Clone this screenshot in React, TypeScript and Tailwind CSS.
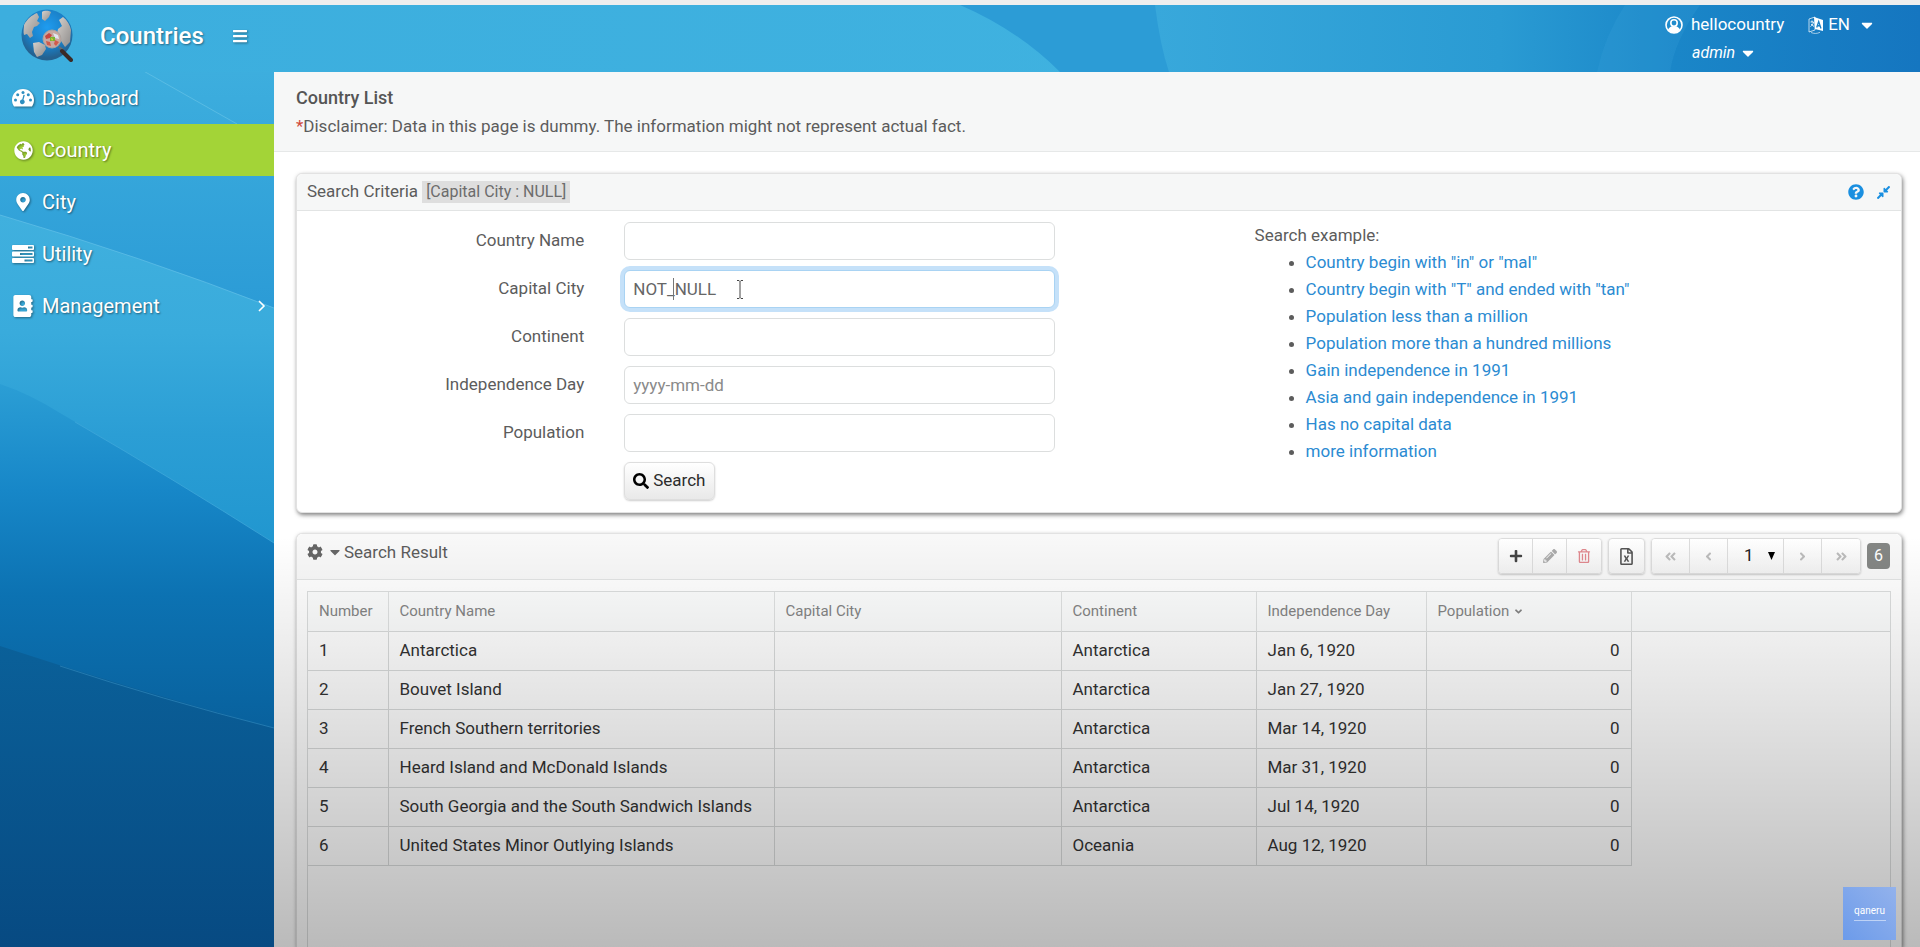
import {
    FaAddressBook,
    FaAngleDoubleLeft,
    FaAngleDoubleRight,
    FaAngleDown,
    FaAngleLeft,
    FaAngleRight,
    FaBars,
    FaCaretDown,
    FaCog,
    FaCompressAlt,
    FaGlobeAmericas,
    FaMapMarkerAlt,
    FaPencilAlt,
    FaPlus,
    FaQuestionCircle,
    FaRegFileExcel,
    FaRegTrashAlt,
    FaSearch,
} from "react-icons/fa";

const DashboardIcon = () => (
    <svg width="22" height="18" viewBox="0 0 22 18">
        <path
            fill="#fff"
            d="M11 0C4.9 0 0 4.9 0 11c0 2.2.6 4.2 1.7 6 .2.4.5.5.9.5h16.800c.4 0 .7-.1.9-.5 1.100-1.800 1.700-3.800 1.700-6C22 4.900 17.100 0 11 0z"
        />
        <g fill="#2f8fc0">
            <circle cx="3.5" cy="11" r="1.5" />
            <circle cx="5.7" cy="5.8" r="1.5" />
            <circle cx="11" cy="3.5" r="1.5" />
            <circle cx="16.3" cy="5.8" r="1.5" />
            <circle cx="18.5" cy="11" r="1.5" />
            <path d="M12.800 6l-1.300 4.700a2.400 2.400 0 1 1-1.300-.3L11.500 5.700z" />
        </g>
    </svg>
);

const UtilityIcon = () => (
    <svg width="22" height="18" viewBox="0 0 22 18">
        <path
            fill="#fff"
            fillRule="evenodd"
            d="M1 0h20a1 1 0 0 1 1 1v3a1 1 0 0 1-1 1H1a1 1 0 0 1-1-1V1a1 1 0 0 1 1-1zm15 1.500v2h4.500v-2zM1 6.500h20a1 1 0 0 1 1 1v3a1 1 0 0 1-1 1H1a1 1 0 0 1-1-1v-3a1 1 0 0 1 1-1zM8 8v2h12.500V8zM1 13h20a1 1 0 0 1 1 1v3a1 1 0 0 1-1 1H1a1 1 0 0 1-1-1v-3a1 1 0 0 1 1-1zm11.500 1.500v2h8v-2z"
        />
    </svg>
);

const UserIcon = () => (
    <svg width="18" height="18" viewBox="0 0 18 18">
        <circle cx="9" cy="9" r="8" fill="none" stroke="#fff" strokeWidth="1.6" />
        <circle cx="9" cy="7" r="3.2" fill="none" stroke="#fff" strokeWidth="1.6" />
        <path d="M3 13.500C4 11.500 6 10.500 7 10.200h4c1 .3 3 1.300 4 3.300A8 8 0 0 1 9 17a8 8 0 0 1-6-3.500z" fill="#fff" />
    </svg>
);

const LanguageIcon = () => (
    <svg width="16" height="18" viewBox="0 0 16 18">
        <path d="M1 3l6-2v13l-6 2z" fill="none" stroke="#fff" strokeWidth="1" opacity=".7" />
        <path d="M2.500 6h3M4 4.500V6M5.500 6c-.5 2.500-1.500 3.500-3 4.500M3 8l3 2.500" fill="none" stroke="#fff" strokeWidth=".9" />
        <path d="M6 1l9 3v11l-8-2z" fill="#fff" />
        <path d="M8.700 11.500l2-6 2.300 7M9.400 9.500l2.800.5" fill="none" stroke="#1a7fc4" strokeWidth="1.3" />
        <path d="M3 16.500c3 1.300 6 1.300 9-.2" fill="none" stroke="#fff" opacity=".6" />
    </svg>
);

const Logo = () => (
    <svg width="52" height="53" viewBox="0 0 52 53" aria-label="Countries logo">
        <defs>
            <radialGradient id="ocean" cx="50%" cy="35%" r="60%">
                <stop offset="0" stopColor="#1f9cf0" />
                <stop offset=".65" stopColor="#1a7fc6" />
                <stop offset="1" stopColor="#24618f" />
            </radialGradient>
            <linearGradient id="land" x1="0" y1="0" x2="1" y2="1">
                <stop offset="0" stopColor="#d6d1cc" />
                <stop offset="1" stopColor="#8e8c8b" />
            </linearGradient>
        </defs>
        <circle cx="26" cy="26" r="25.5" fill="url(#ocean)" />
        <g fill="url(#land)">
            <path d="M3 16C6 10 11 6 16 4l2 4-2 4 3 2-3 3-3 1-2 5 1 4-3 2-3-4-3 1c-1-3 0-7 0-10z" />
            <path d="M21 3c3-2 7-1 9 0l-2 5-4 4-3-2z" />
            <path d="M38 11l4-3c4 3 7 8 8 13l-1 12-5 5-4-6-4-7 1-5 4-3z" />
            <path d="M12 34l6-1 6 3 1 4-4 6-5 2-3-5z" />
        </g>
        <circle cx="31" cy="30" r="9" fill="#c8a8a0" stroke="#a9a29e" />
        <path d="M24 27l4-3 3 2-2 3-4 1z" fill="#c7463f" />
        <path d="M32 24l5 2 1 4-4-1z" fill="#e0e6ef" />
        <path d="M29 28h5v4h-5z" fill="#78b530" />
        <path d="M25 32l4 1 1 4-4-1zM34 31l4 2-3 4-2-2z" fill="#cf5b4b" />
        <path d="M30 29l2 1-1 2z" fill="#f0d13a" />
        <path d="M38 38l4 3" stroke="#6b6b6b" strokeWidth="2" />
        <path d="M41 42l9 9" stroke="#3b2b27" strokeWidth="4" strokeLinecap="round" />
    </svg>
);

const HeaderArt = () => (
    <svg className="absolute inset-0 h-full w-full" viewBox="0 0 1920 67" preserveAspectRatio="none">
        <defs>
            <linearGradient id="headBase" x1="0" y1="0" x2="1" y2="0">
                <stop offset="0" stopColor="#3caede" />
                <stop offset="1" stopColor="#41b4e1" />
            </linearGradient>
            <linearGradient id="headRight" x1="0" y1="0" x2="1" y2="0">
                <stop offset="0" stopColor="#38a8db" />
                <stop offset=".45" stopColor="#2a9bd3" />
                <stop offset=".68" stopColor="#1a86c8" />
                <stop offset="1" stopColor="#1576c0" />
            </linearGradient>
        </defs>
        <rect width="1920" height="67" fill="url(#headBase)" />
        <path d="M960 0H1200V67H1060Q1018 25 960 0z" fill="#2c9cd6" />
        <path d="M1155 0H1920V67H1169Q1160 40 1155 0z" fill="url(#headRight)" />
        <path d="M1625 0H1700Q1675 35 1670 67H1597Q1605 30 1625 0z" fill="#3aa6da" opacity=".22" />
    </svg>
);

const SidebarArt = () => (
    <svg className="absolute inset-0 h-full w-full" viewBox="0 0 274 875" preserveAspectRatio="none">
        <defs>
            <linearGradient id="sideTop" x1="0" y1="0" x2="0" y2="1">
                <stop offset="0" stopColor="#3daede" />
                <stop offset="1" stopColor="#2b9bd6" />
            </linearGradient>
            <linearGradient id="sideSecond" x1="0" y1="0" x2="0" y2="1">
                <stop offset="0" stopColor="#40b0de" />
                <stop offset=".35" stopColor="#39abdc" />
                <stop offset=".65" stopColor="#2b9ed5" />
                <stop offset="1" stopColor="#2096cf" />
            </linearGradient>
            <linearGradient id="sideThird" x1="0" y1="0" x2="0" y2="1">
                <stop offset="0" stopColor="#2b9ed5" />
                <stop offset=".3" stopColor="#1787c8" />
                <stop offset=".6" stopColor="#0c72b2" />
                <stop offset="1" stopColor="#08609c" />
            </linearGradient>
            <linearGradient id="sideLast" x1="0" y1="0" x2="0" y2="1">
                <stop offset="0" stopColor="#0a6099" />
                <stop offset="1" stopColor="#074a82" />
            </linearGradient>
        </defs>
        <rect width="274" height="240" fill="url(#sideTop)" />
        <path d="M110 -20L237 52" stroke="#6cc6e8" strokeWidth="1" opacity=".6" />
        <path d="M0 143Q140 184 274 236V480H0z" fill="url(#sideSecond)" />
        <path d="M0 143Q140 184 274 236" fill="none" stroke="#62c1e8" opacity=".7" />
        <path d="M0 312Q30 322 60 341Q170 405 274 471V665H0z" fill="url(#sideThird)" />
        <path d="M75 350Q170 405 274 471" fill="none" stroke="#41a9dc" opacity=".7" />
        <path d="M0 574Q140 620 274 656V875H0z" fill="url(#sideLast)" />
        <path d="M60 594Q160 627 274 656" fill="none" stroke="#2d86bb" opacity=".7" />
    </svg>
);

const menu = [
    { label: "Dashboard", icon: <DashboardIcon /> },
    { label: "Country", icon: <FaGlobeAmericas size={19} />, active: true },
    { label: "City", icon: <FaMapMarkerAlt size={18} /> },
    { label: "Utility", icon: <UtilityIcon /> },
    { label: "Management", icon: <FaAddressBook size={22} />, sub: true },
];

const examples = [
    'Country begin with "in" or "mal"',
    'Country begin with "T" and ended with "tan"',
    "Population less than a million",
    "Population more than a hundred millions",
    "Gain independence in 1991",
    "Asia and gain independence in 1991",
    "Has no capital data",
    "more information",
];

const countries = [
    ["Antarctica", "Antarctica", "Jan 6, 1920"],
    ["Bouvet Island", "Antarctica", "Jan 27, 1920"],
    ["French Southern territories", "Antarctica", "Mar 14, 1920"],
    ["Heard Island and McDonald Islands", "Antarctica", "Mar 31, 1920"],
    ["South Georgia and the South Sandwich Islands", "Antarctica", "Jul 14, 1920"],
    ["United States Minor Outlying Islands", "Oceania", "Aug 12, 1920"],
];

const inputClass =
    "h-[38px] w-full rounded-md border border-[#dcdede] bg-white px-2 text-[#666] placeholder:text-[#8a8a8a] outline-none";

const toolClass =
    "flex h-full items-center justify-center border-r border-[#dcdcdc] last:border-r-0 bg-gradient-to-b from-white to-[#f2f2f2]";

const Header = () => (
    <header className="relative h-[67px] bg-[#3daede] text-white [text-shadow:1px_1px_2px_rgba(0,0,0,0.4)]">
        <HeaderArt />
        <div className="relative flex h-full items-start justify-between">
            <div className="flex items-center pt-1 pl-[21px]">
                <Logo />
                <a href="#" className="ml-[27px] text-2xl font-medium">
                    Countries
                </a>
                <button aria-label="Toggle menu" className="ml-7 drop-shadow-[1px_1px_1px_rgba(0,0,0,0.4)]">
                    <FaBars size={16} />
                </button>
            </div>

            <div className="flex gap-6 pt-1 pr-11 text-[17px]">
                <div className="flex flex-col">
                    <button className="flex h-8 items-center gap-2">
                        <UserIcon />
                        hellocountry
                    </button>
                    <button className="flex h-6 items-center justify-center gap-1 text-base italic">
                        admin
                        <FaCaretDown size={18} />
                    </button>
                </div>
                <button className="flex h-8 items-center gap-1">
                    <LanguageIcon />
                    EN
                    <FaCaretDown size={18} className="ml-1" />
                </button>
            </div>
        </div>
    </header>
);

const Sidebar = () => (
    <nav className="relative w-[274px] shrink-0 bg-[#0c72b2]">
        <SidebarArt />
        <ul className="relative text-white [text-shadow:1px_1px_2px_rgba(0,0,0,0.45)]">
            {menu.map((item) => (
                <li key={item.label}>
                    <a
                        href="#"
                        className={
                            item.active
                                ? "flex h-[52px] items-center bg-[#a3d437] pr-2 pl-3 text-xl"
                                : "flex h-[52px] items-center pr-2 pl-3 text-xl"
                        }
                    >
                        <span className="mr-2 flex w-[22px] justify-center drop-shadow-[1px_1px_1px_rgba(0,0,0,0.4)]">
                            {item.icon}
                        </span>
                        {item.label}
                        {item.sub && (
                            <svg className="ml-auto" width="8" height="12" viewBox="0 0 8 12">
                                <path d="M1 1l5 5-5 5" fill="none" stroke="#fff" strokeWidth="1.6" />
                            </svg>
                        )}
                    </a>
                </li>
            ))}
        </ul>
    </nav>
);

const SearchCriteria = () => (
    <section className="rounded-md border border-[#e2e2e2] bg-white shadow-[1px_2px_4px_rgba(0,0,0,0.5)]">
        <div className="flex h-[37px] items-center rounded-t-md border-b border-[#e2e4e4] bg-[#f6f7f7] px-[10px]">
            <h2>Search Criteria</h2>
            <span className="ml-1 bg-[#dedede] px-1 text-base leading-[22px] text-[#6c6c6c]">[Capital City : NULL]</span>
            <div className="ml-auto flex gap-3 text-[#1a8fe0]">
                <button aria-label="Help">
                    <FaQuestionCircle size={16} />
                </button>
                <button aria-label="Collapse">
                    <FaCompressAlt size={15} />
                </button>
            </div>
        </div>

        <div className="flex pt-[11px] pb-3">
            <form className="grid w-[59.7%] grid-cols-[30%_45%] content-start items-center gap-x-10 gap-y-[10px]">
                <label htmlFor="name" className="text-right">
                    Country Name
                </label>
                <input id="name" className={inputClass} />

                <label htmlFor="capital" className="text-right">
                    Capital City
                </label>
                <div className="relative">
                    <input
                        id="capital"
                        defaultValue="NOT_NULL"
                        className="h-[38px] w-full rounded-md border border-[#a9d3f3] bg-white px-2 text-[#666] shadow-[0_0_0_4px_#c5e1f9] outline-none"
                    />
                    <span className="absolute top-2 left-[49px] h-[22px] w-px bg-[#777]" />
                    <svg className="absolute top-[10px] left-[112px]" width="8" height="19" viewBox="0 0 8 19">
                        <path d="M1 .5h2l1 1 1-1h2M4 1.500v16M1 18.500h2l1-1 1 1h2" fill="none" stroke="#444" />
                    </svg>
                </div>

                <label htmlFor="continent" className="text-right">
                    Continent
                </label>
                <input id="continent" className={inputClass} />

                <label htmlFor="independence" className="text-right">
                    Independence Day
                </label>
                <input id="independence" placeholder="yyyy-mm-dd" className={inputClass} />

                <label htmlFor="population" className="text-right">
                    Population
                </label>
                <input id="population" className={inputClass} />

                <button
                    type="button"
                    className="col-start-2 flex h-[38px] items-center gap-1 justify-self-start rounded-md border border-[#dedede] bg-gradient-to-b from-white to-[#e9e9e9] px-2 text-[#2c2c2c] shadow-[0_1px_2px_rgba(0,0,0,0.2)]"
                >
                    <FaSearch size={16} className="text-black" />
                    Search
                </button>
            </form>

            <div className="leading-[27px]">
                <p>Search example:</p>
                <ul className="list-disc pl-[51px]">
                    {examples.map((text) => (
                        <li key={text}>
                            <a href="#" className="text-[#2b8bd2]">
                                {text}
                            </a>
                        </li>
                    ))}
                </ul>
            </div>
        </div>
    </section>
);

const Toolbar = () => (
    <div className="flex h-9 items-center gap-[6px]">
        <div className="flex h-full overflow-hidden rounded border border-[#dcdcdc] shadow-[0_1px_2px_rgba(0,0,0,0.2)]">
            <button aria-label="Add" className={`${toolClass} w-[34px] text-[#444]`}>
                <FaPlus size={14} />
            </button>
            <button aria-label="Edit" className={`${toolClass} w-[34px] text-[#aaa]`}>
                <FaPencilAlt size={14} />
            </button>
            <button aria-label="Delete" className={`${toolClass} w-[34px] text-[#e0888e]`}>
                <FaRegTrashAlt size={14} />
            </button>
        </div>
        <button
            aria-label="Export"
            className="flex h-full w-[37px] items-center justify-center rounded border border-[#dcdcdc] bg-gradient-to-b from-white to-[#f2f2f2] text-[#555] shadow-[0_1px_2px_rgba(0,0,0,0.2)]"
        >
            <FaRegFileExcel size={17} />
        </button>
        <div className="flex h-full overflow-hidden rounded border border-[#dcdcdc] text-[#bbb] shadow-[0_1px_2px_rgba(0,0,0,0.2)]">
            <button aria-label="First page" className={`${toolClass} w-[38px]`}>
                <FaAngleDoubleLeft size={13} />
            </button>
            <button aria-label="Previous page" className={`${toolClass} w-[38px]`}>
                <FaAngleLeft size={13} />
            </button>
            <div className={`${toolClass} relative w-14`}>
                <select aria-label="Page" className="h-full w-full appearance-none pl-4 text-[17px] text-[#222] outline-none">
                    <option>1</option>
                </select>
                <svg className="pointer-events-none absolute right-2 h-2 w-[7px]" viewBox="0 0 7 8">
                    <path d="M0 0h7L3.500 8z" fill="#000" />
                </svg>
            </div>
            <button aria-label="Next page" className={`${toolClass} w-[38px]`}>
                <FaAngleRight size={13} />
            </button>
            <button aria-label="Last page" className={`${toolClass} w-[38px]`}>
                <FaAngleDoubleRight size={13} />
            </button>
        </div>
        <span className="flex h-[26px] w-[23px] items-center justify-center rounded bg-[#848684] text-base text-white">6</span>
    </div>
);

const SearchResult = () => (
    <section className="flex grow flex-col rounded-t-md border border-b-0 border-[#e2e2e2] bg-white shadow-[1px_2px_4px_rgba(0,0,0,0.5)]">
        <div className="flex h-[46px] items-start rounded-t-md border-b border-[#e2e4e4] bg-[#f8f8f8] pt-1 pr-[11px] pl-[10px]">
            <button aria-label="Options" className="flex h-7 items-center gap-1 text-[#666]">
                <FaCog size={16} />
                <FaCaretDown size={16} />
            </button>
            <h2 className="ml-px leading-7">Search Result</h2>
            <div className="ml-auto">
                <Toolbar />
            </div>
        </div>

        <div className="flex grow flex-col px-[10px] pt-[11px]">
            <div className="grow border-x border-t border-[#dcdede]">
                <table className="w-full table-fixed border-collapse text-left text-[#333]">
                    <thead className="h-[39px] bg-[#fcfdfd] text-[15px] text-[#858585]">
                        <tr className="border-b border-[#dadcdc] [&>th]:border-r [&>th]:border-[#dfe1e1] [&>th]:px-[11px] [&>th]:font-normal [&>th:last-child]:border-r-0">
                            <th className="w-20">Number</th>
                            <th className="w-[386px]">Country Name</th>
                            <th className="w-[287px]">Capital City</th>
                            <th className="w-[195px]">Continent</th>
                            <th className="w-[170px]">Independence Day</th>
                            <th className="w-[205px]">
                                <span className="flex items-center gap-1">
                                    Population
                                    <FaAngleDown size={11} />
                                </span>
                            </th>
                            <th aria-label="Actions" />
                        </tr>
                    </thead>
                    <tbody>
                        {countries.map(([name, continent, day], i) => (
                            <tr key={name} className="h-[39px] [&>td]:border-r [&>td]:border-b [&>td]:border-[#d9dbdb] [&>td]:px-[11px]">
                                <td>{i + 1}</td>
                                <td>{name}</td>
                                <td />
                                <td>{continent}</td>
                                <td>{day}</td>
                                <td className="text-right">0</td>
                            </tr>
                        ))}
                    </tbody>
                </table>
            </div>
        </div>
    </section>
);

export default function App() {
    return (
        <div className="flex min-h-screen flex-col overflow-hidden bg-white font-[Roboto,'Liberation_Sans',sans-serif] text-[17px] text-[#5c5c5c]">
            <div className="h-[5px] bg-[#eeeeee]" />
            <Header />
            <div className="flex grow">
                <Sidebar />
                <main className="relative flex min-w-0 grow flex-col">
                    <div className="h-20 border-b border-[#e6e8e8] bg-[#f6f7f7] px-[22px] pt-3">
                        <h1 className="text-lg leading-7 font-medium text-[#555]">Country List</h1>
                        <p className="leading-7">
                            <span className="text-[#d04a3c]">*</span>Disclaimer: Data in this page is dummy. The information might
                            not represent actual fact.
                        </p>
                    </div>

                    <div className="flex grow flex-col gap-5 pt-[21px] pr-[18px] pl-[22px]">
                        <SearchCriteria />
                        <SearchResult />
                    </div>

                    {/* fades the lower half of the page */}
                    <div className="pointer-events-none absolute inset-x-0 bottom-0 h-[47%] bg-gradient-to-b from-transparent to-black/27" />

                    <div className="absolute right-6 bottom-[7px] flex size-[53px] flex-col items-center justify-center bg-gradient-to-tr from-[#6c9bea] to-[#93b2ec] leading-none text-white">
                        <span className="text-[10px]">qaneru</span>
                        <span className="mt-1 h-px w-8 bg-white/50" />
                    </div>
                </main>
            </div>
        </div>
    );
}
